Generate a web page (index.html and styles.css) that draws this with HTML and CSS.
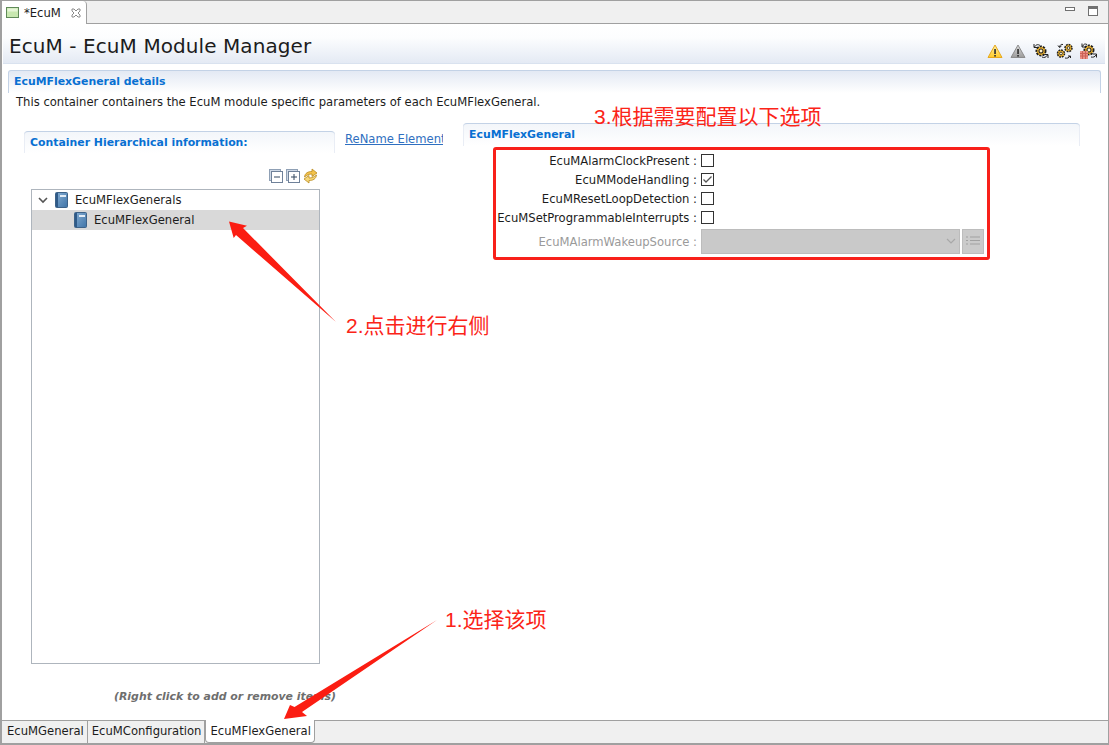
FILE: index.html
```html
<!DOCTYPE html>
<html lang="en">
<head>
<meta charset="utf-8">
<title>EcuM</title>
<link rel="stylesheet" href="styles.css">
</head>
<body>
<svg class="defs" width="0" height="0">
  <defs>
    <linearGradient id="warn-y" x1="0" y1="0" x2="0" y2="1"><stop offset="0" stop-color="#fff3a8"/><stop offset="1" stop-color="#ffc928"/></linearGradient>
    <linearGradient id="warn-g" x1="0" y1="0" x2="0" y2="1"><stop offset="0" stop-color="#dcdcdc"/><stop offset="1" stop-color="#9a9a9a"/></linearGradient>
    <linearGradient id="book-g" x1="0" y1="0" x2="1" y2="1"><stop offset="0" stop-color="#86aed3"/><stop offset="1" stop-color="#3f74a8"/></linearGradient>
    <g id="gear">
      <circle cx="5" cy="5" r="4.600" fill="#f5b92e" stroke="#1e1e1e" stroke-width="1.800" stroke-dasharray="2.200 1.100"/>
      <circle cx="5" cy="5" r="2" fill="#fff4cf" stroke="#2a2a2a" stroke-width="1.100"/>
    </g>
    <g id="gear-s">
      <circle cx="4" cy="4" r="3.500" fill="#f5b92e" stroke="#1e1e1e" stroke-width="1.500" stroke-dasharray="1.800 .9"/>
      <circle cx="4" cy="4" r="1.400" fill="#fff4cf" stroke="#2a2a2a" stroke-width=".9"/>
    </g>
    <g id="book">
      <rect x=".5" y=".5" width="12" height="15" rx="1" fill="url(#book-g)" stroke="#3d6288"/>
      <rect x="1" y="1" width="2" height="14" fill="#2f5a88"/>
      <rect x="5" y="3" width="6" height="2" fill="#e2ecf6"/>
    </g>
  </defs>
</svg>
<div class="window">
  <div class="tabstrip">
    <div class="editor-tab">
      <svg class="tab-icon" width="13" height="11" viewBox="0 0 13 11"><rect x=".5" y=".5" width="12" height="10" fill="#c8e8b0" stroke="#5f8a58"/><rect x="1.500" y="1.500" width="10" height="3" fill="#e6f5d8"/></svg>
      <span class="tab-name">*EcuM</span>
      <svg class="tab-close" width="10" height="10" viewBox="0 0 10 10"><path d="M1 1h2l2 2 2-2h2v2L7 5l2 2v2H7L5 7 3 9H1V7l2-2-2-2z" fill="#fff" stroke="#8a8a8a"/></svg>
    </div>
    <div class="win-controls">
      <span class="win-min"></span>
      <span class="win-max"></span>
    </div>
  </div>
  <div class="editor">
    <header class="form-head">
      <h1 class="form-title">EcuM - EcuM Module Manager</h1>
      <div class="form-tools">
        <svg width="16" height="15" viewBox="0 0 16 15"><path d="M8 1 15 13.500H1z" fill="url(#warn-y)" stroke="#e6a81e" stroke-linejoin="round"/><rect x="7.200" y="5" width="1.700" height="5" fill="#333"/><rect x="7.200" y="11" width="1.700" height="1.600" fill="#333"/></svg>
        <svg width="16" height="15" viewBox="0 0 16 15"><path d="M8 1 15 13.500H1z" fill="url(#warn-g)" stroke="#8c8c8c" stroke-linejoin="round"/><rect x="7.200" y="5" width="1.700" height="5" fill="#333"/><rect x="7.200" y="11" width="1.700" height="1.600" fill="#333"/></svg>
        <svg width="16" height="16" viewBox="0 0 16 16"><use href="#gear" x="3" y="3"/><path d="M7 2.500C5 1 3 1.500 1.500 4M1 1v3.500h3.500M9 14c2 1 4 .5 5.500-2M15 15v-3.500h-3.500" stroke="#222" fill="none"/></svg>
        <svg width="17" height="16" viewBox="0 0 17 16"><use href="#gear-s" x="1" y="6.500"/><use href="#gear-s" x="8.500" y="1"/><path d="M7 1.500C5 1 4 2 3.500 4M2 2.500 3.500 4.500 5.500 3M9 15c2 .5 4 0 5-2M12 13h2.500v2" stroke="#222" fill="none"/></svg>
        <svg width="17" height="16" viewBox="0 0 17 16"><use href="#gear" x="4" y="2"/><path d="M7 1.500C5 .5 3.500 1 2.500 3.500M2 .5v3.500h3.500M11 14c2 .5 4 0 5-2M16.500 14.500V11H13" stroke="#222" fill="none"/><rect x="0" y="8" width="8" height="8" fill="#ea9184"/><path d="M0 10.500h8M0 13h8M2.500 8v8M5.500 8v8" stroke="#cc6257"/></svg>
      </div>
    </header>
    <section class="details">
      <h2 class="details-title">EcuMFlexGeneral details</h2>
      <p class="details-desc">This container containers the EcuM module specific parameters of each EcuMFlexGeneral.</p>
    </section>
    <div class="columns">
      <section class="tree-panel">
        <h3 class="panel-title">Container Hierarchical information:</h3>
        <div class="tree-tools">
          <svg width="14" height="14" viewBox="0 0 14 14"><rect x=".5" y=".5" width="11" height="11" fill="#cfd9e6" stroke="#8fa0b5"/><rect x="2.500" y="2.500" width="11" height="11" fill="#fff" stroke="#6f8199"/><path d="M5 8h6" stroke="#33465e"/></svg>
          <svg width="14" height="14" viewBox="0 0 14 14"><rect x=".5" y=".5" width="11" height="11" fill="#cfd9e6" stroke="#8fa0b5"/><rect x="2.500" y="2.500" width="11" height="11" fill="#fff" stroke="#6f8199"/><path d="M5 8h6M8 5v6" stroke="#33465e"/></svg>
          <svg width="15" height="16" viewBox="0 0 15 16"><path d="M1.500 9C2 5 5 3.500 9 3.500V1l5 4-5 3.500V6C6 6 4 7 1.500 9z" fill="#f3c24a" stroke="#b98a20" stroke-width=".8"/><path d="M13.500 7c-.5 4-3.500 5.500-7.500 5.500V15L1 11l5-3.500V10c3 0 5-1 7.500-3z" fill="#f7d777" stroke="#b98a20" stroke-width=".8"/></svg>
        </div>
        <div class="tree">
          <div class="tree-row">
            <svg class="twisty" width="10" height="7" viewBox="0 0 10 7"><path d="M1 1l4 4 4-4" fill="none" stroke="#555" stroke-width="1.600"/></svg>
            <svg width="13" height="16" viewBox="0 0 13 16"><use href="#book"/></svg>
            <span>EcuMFlexGenerals</span>
          </div>
          <div class="tree-row child selected">
            <svg width="13" height="16" viewBox="0 0 13 16"><use href="#book"/></svg>
            <span>EcuMFlexGeneral</span>
          </div>
        </div>
        <p class="hint">(Right click to add or remove items)</p>
      </section>
      <a class="rename" href="#">ReName Element</a>
      <section class="params">
        <h3 class="panel-title params-title">EcuMFlexGeneral</h3>
        <div class="param-grid">
          <label class="param-label">EcuMAlarmClockPresent :</label><span class="check"></span>
          <label class="param-label">EcuMModeHandling :</label><span class="check"><svg width="11" height="11" viewBox="0 0 11 11"><path d="M1.500 5.500 4 8l5.500-5.500" fill="none" stroke="#555" stroke-width="1.300"/></svg></span>
          <label class="param-label">EcuMResetLoopDetection :</label><span class="check"></span>
          <label class="param-label">EcuMSetProgrammableInterrupts :</label><span class="check"></span>
          <label class="param-label disabled">EcuMAlarmWakeupSource :</label>
          <div class="combo-row">
            <div class="combo"><svg width="10" height="6" viewBox="0 0 10 6"><path d="M1 1l4 4 4-4" fill="none" stroke="#a8a8a8" stroke-width="1.200"/></svg></div>
            <div class="combo-btn"><svg width="14" height="10" viewBox="0 0 14 10"><path d="M0 1h2M4 1h10M0 4.500h2M4 4.500h10M0 8h2M4 8h10" stroke="#a2a2a2" stroke-width="1.200"/></svg></div>
          </div>
        </div>
      </section>
    </div>
  </div>
  <div class="page-tabs">
    <div class="page-tab">EcuMGeneral</div>
    <div class="page-tab">EcuMConfiguration</div>
    <div class="page-tab active">EcuMFlexGeneral</div>
  </div>
</div>

<div class="redbox"></div>
<svg class="arrows" width="1109" height="745" viewBox="0 0 1109 745">
  <path d="M229 221.500 247 225.700 243 228 336 322 236 235 233.700 238z" fill="#fb1d12"/>
  <path d="M284 719 290 705 294.500 707 437 620 302 712 307 716z" fill="#fb1d12"/>
</svg>
<div class="note note-1">1.选择该项</div>
<div class="note note-2">2.点击进行右侧</div>
<div class="note note-3">3.根据需要配置以下选项</div>
</body>
</html>
```
FILE: styles.css
```css
* { box-sizing: border-box; }
html, body { margin: 0; padding: 0; }
body {
  width: 1109px;
  height: 745px;
  overflow: hidden;
  background: #fff;
  font-family: "DejaVu Sans", sans-serif;
  font-size: 11.6px;
  color: #1c1c1c;
  position: relative;
}
.window {
  width: 1109px;
  height: 745px;
  display: flex;
  flex-direction: column;
  border: 1px solid #a0a0a0;
  border-width: 1px 1px 2px 2px;
}
.tabstrip {
  height: 23px;
  flex: none;
  display: flex;
  justify-content: space-between;
  background: #f0f0f0;
  border-bottom: 1px solid #a0a0a0;
}
.editor-tab {
  width: 85px;
  height: 23px;
  background: #fff;
  border-right: 1px solid #a0a0a0;
  border-radius: 0 4px 0 0;
  display: flex;
  align-items: center;
  padding-left: 4px;
  gap: 5px;
}
.tab-close { margin-left: 5px; }
.win-controls { display: flex; gap: 13px; padding: 5px 10px 0 0; }
.win-min { width: 10px; height: 4px; border: 1px solid #707070; background: #fff; margin-top: 1px; }
.win-max { width: 10px; height: 10px; border: 1px solid #707070; border-top-width: 3px; background: #fff; }
.editor {
  flex: 1;
  min-height: 0;
  display: flex;
  flex-direction: column;
  background: #fff;
}
.form-head {
  height: 40px;
  flex: none;
  margin-left: 1px;
  margin-right: 3px;
  background: linear-gradient(#fff, #fcfdfe 35%, #e4eaf4);
  border-bottom: 1px solid #d9e2ef;
  display: flex;
  justify-content: space-between;
  padding: 10px 8px 0 6px;
}
.form-title { margin: 0; font-size: 20px; line-height: 24px; font-weight: 400; letter-spacing: .08px; }
.form-tools { display: flex; align-items: center; gap: 7px; height: 30px; padding-top: 4px; }
.details {
  margin: 6px 7px 0 6px;
  flex: none;
}
.details-title {
  margin: 0;
  height: 23px;
  border: 1px solid #c3d2e6;
  border-bottom: 0;
  border-radius: 3px 3px 0 0;
  background: linear-gradient(#e3e9f4, #fff);
  color: #0870d2;
  font-size: 10.9px;
  line-height: 22px;
  padding-left: 5px;
}
.details-desc { margin: 0; padding: 1px 0 0 8px; line-height: 16px; }
.columns {
  flex: 1;
  min-height: 0;
  display: grid;
  grid-template-columns: 311px 98px 627px;
  column-gap: 10px;
  padding: 21px 0 0 22px;
  align-items: start;
}
.tree-panel {
  position: relative;
  display: flex;
  flex-direction: column;
  height: 590px;
}
.panel-title {
  margin: 0;
  height: 22px;
  border-top: 1px solid #c3d2e6;
  border-radius: 4px 4px 0 0;
  background: linear-gradient(#f3f6fa, #fff);
  color: #0870d2;
  font-size: 10.9px;
  line-height: 22px;
  padding-left: 6px;
  box-shadow: inset 1px 0 0 #e9edf5, inset -1px 0 0 #e9edf5;
}
.tree-tools {
  display: flex;
  justify-content: flex-end;
  gap: 3px;
  padding: 10px 0 0;
  margin-right: 17px;
  align-items: center;
  height: 36px;
}
.tree {
  margin-left: 7px;
  width: 289px;
  height: 475px;
  border: 1px solid #aeb5bd;
  background: #fff;
}
.tree-row {
  height: 20px;
  display: flex;
  align-items: center;
  padding-left: 6px;
  gap: 7px;
}
.tree-row.child { padding-left: 42px; }
.tree-row.selected { background: #d9d9d9; }
.hint {
  margin: 25px 0 0 90px;
  font-weight: 700;
  font-style: italic;
  color: #6e6e6e;
  font-size: 10.9px;
  line-height: 16px;
  white-space: nowrap;
}
.rename {
  color: #2f6fc0;
  text-decoration: underline;
  width: 98px;
  overflow: hidden;
  white-space: nowrap;
  line-height: 16px;
}
.params { margin: -8px 0 0 10px; width: 617px; }
.params-title { height: 23px; padding-left: 6px; }
.param-grid {
  display: grid;
  grid-template-columns: 234px 284px;
  column-gap: 4px;
  grid-auto-rows: 19px;
  align-items: center;
  margin-top: 5px;
}
.param-label { text-align: right; white-space: nowrap; line-height: 16px; }
.param-label.disabled { color: #9a9a9a; margin-top: 11px; }
.check {
  width: 13px;
  height: 13px;
  border: 1px solid #333;
  background: #fff;
  display: flex;
  align-items: center;
  justify-content: center;
}
.combo-row {
  display: flex;
  gap: 2px;
  height: 25px;
  margin-top: 9px;
}
.combo {
  width: 259px;
  height: 25px;
  background: #c9c9c9;
  border: 1px solid #bcbcbc;
  display: flex;
  align-items: center;
  justify-content: flex-end;
  padding-right: 3px;
}
.combo-btn {
  width: 22px;
  height: 25px;
  background: #cbcbcb;
  border: 1px solid #bdbdbd;
  display: flex;
  align-items: center;
  justify-content: center;
}
.page-tabs {
  flex: none;
  height: 23px;
  display: flex;
  background: #f0f0f0;
  border-top: 1px solid #a0a0a0;
  padding-left: 1px;
}
.page-tab {
  padding: 0 3px 0 4px;
  line-height: 20px;
  border-right: 1px solid #a0a0a0;
  white-space: nowrap;
}
.page-tab.active {
  background: #fff;
  margin-top: -1px;
  border: 1px solid #a0a0a0;
  border-top: 0;
  border-radius: 0 0 4px 4px;
  height: 23px;
  line-height: 22px;
}
.redbox {
  position: absolute;
  left: 493px;
  top: 147px;
  width: 497px;
  height: 113px;
  border: 3px solid #f8201a;
  border-radius: 3px;
}
.arrows { position: absolute; left: 0; top: 0; pointer-events: none; }
.note {
  position: absolute;
  font-family: "Liberation Sans", "Noto Sans CJK SC", sans-serif;
  font-size: 21px;
  line-height: 24px;
  color: #fb2418;
  white-space: nowrap;
}
.note-1 { left: 445px; top: 608px; }
.note-2 { left: 346px; top: 314px; }
.note-3 { left: 594px; top: 105px; }
.defs { position: absolute; }
```
